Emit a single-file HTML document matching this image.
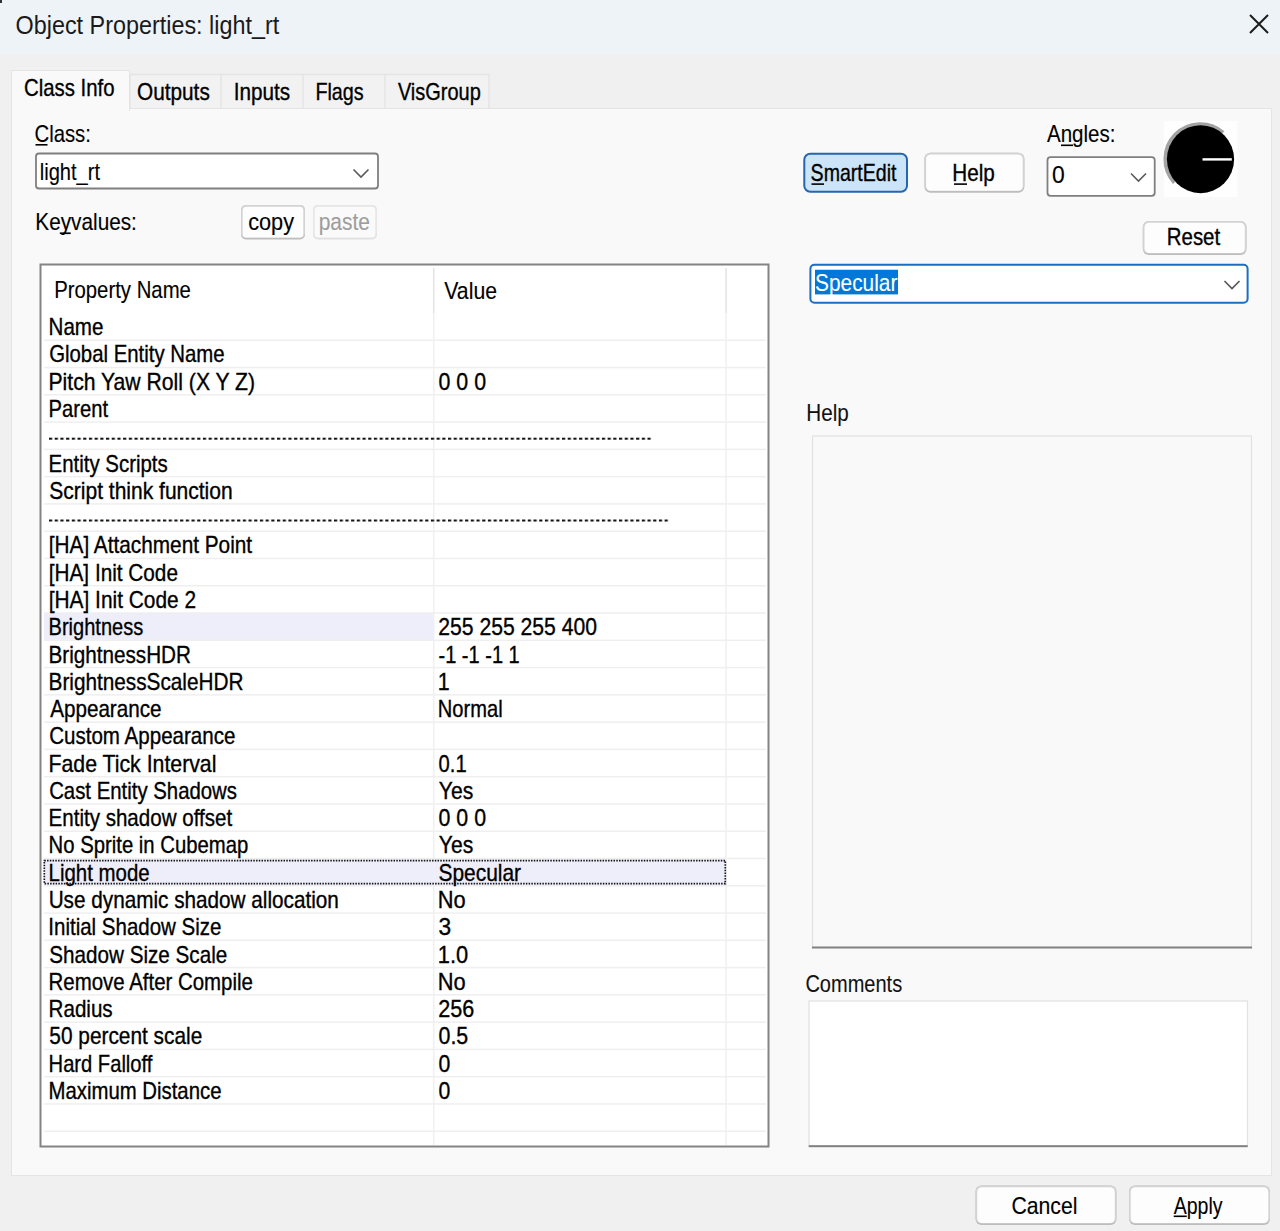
<!DOCTYPE html>
<html><head><meta charset="utf-8"><title>Object Properties: light_rt</title>
<style>html,body{margin:0;padding:0;background:#f0f0f0;overflow:hidden}
svg{display:block} text{font-family:"Liberation Sans",sans-serif;white-space:pre}</style></head>
<body><svg width="1280" height="1231" viewBox="0 0 1280 1231">
<defs><pattern id="dash" x="49" y="0" width="5.7" height="2" patternUnits="userSpaceOnUse"><rect x="0" y="0" width="3.2" height="2" fill="#111"/></pattern></defs>
<rect x="0" y="0" width="1280" height="1231" fill="#f0f0f0"/>
<rect x="0" y="0" width="1280" height="55" fill="#eef3f8"/>
<rect x="0" y="0" width="2" height="3" fill="#333"/>
<text x="15.55" y="33.70" font-size="25" textLength="263.64" lengthAdjust="spacingAndGlyphs" fill="#1a1a1a" stroke="#1a1a1a" stroke-width="0">Object Properties: light_rt</text>
<path d="M1250 15 L1268 33 M1268 15 L1250 33" stroke="#1b1b1b" stroke-width="2" fill="none"/>
<rect x="130" y="74" width="91" height="35" fill="#f2f2f2"/>
<rect x="221" y="74" width="82" height="35" fill="#f2f2f2"/>
<rect x="303" y="74" width="82" height="35" fill="#f2f2f2"/>
<rect x="385" y="74" width="104" height="35" fill="#f2f2f2"/>
<path d="M130 74.5 H489" stroke="#e4e4e4" stroke-width="1.5"/>
<path d="M130 74 V108" stroke="#e4e4e4" stroke-width="1.5"/>
<path d="M221 74 V108" stroke="#e4e4e4" stroke-width="1.5"/>
<path d="M303 74 V108" stroke="#e4e4e4" stroke-width="1.5"/>
<path d="M385 74 V108" stroke="#e4e4e4" stroke-width="1.5"/>
<path d="M489 74 V108" stroke="#e4e4e4" stroke-width="1.5"/>
<text x="137.07" y="100.00" font-size="24" textLength="72.70" lengthAdjust="spacingAndGlyphs" fill="#000" stroke="#000" stroke-width="0.35">Outputs</text>
<text x="233.64" y="100.00" font-size="24" textLength="56.37" lengthAdjust="spacingAndGlyphs" fill="#000" stroke="#000" stroke-width="0.35">Inputs</text>
<text x="315.42" y="100.00" font-size="24" textLength="48.28" lengthAdjust="spacingAndGlyphs" fill="#000" stroke="#000" stroke-width="0.35">Flags</text>
<text x="397.90" y="100.00" font-size="24" textLength="82.91" lengthAdjust="spacingAndGlyphs" fill="#000" stroke="#000" stroke-width="0.35">VisGroup</text>
<rect x="11.5" y="108.5" width="1260" height="1067" fill="#f9f9f9" stroke="#e4e4e4" stroke-width="1"/>
<rect x="11.5" y="70.5" width="118" height="40" fill="#f9f9f9" stroke="#e4e4e4" stroke-width="1"/>
<rect x="12" y="107" width="117" height="4" fill="#f9f9f9"/>
<text x="23.98" y="95.60" font-size="24" textLength="90.61" lengthAdjust="spacingAndGlyphs" fill="#000" stroke="#000" stroke-width="0.35">Class Info</text>
<text x="34.48" y="142.40" font-size="24" textLength="56.41" lengthAdjust="spacingAndGlyphs" fill="#000" stroke="#000" stroke-width="0.12">Class:</text>
<rect x="35.5" y="144" width="12" height="1.6" fill="#000"/>
<rect x="36" y="153.5" width="342" height="35" rx="3" fill="#fff" stroke="#7f7f7f" stroke-width="1.8"/>
<text x="39.69" y="179.70" font-size="24" textLength="60.44" lengthAdjust="spacingAndGlyphs" fill="#000" stroke="#000" stroke-width="0.12">light_rt</text>
<path d="M353.5 169.5 L361 177 L368.5 169.5" stroke="#5a5a5a" stroke-width="1.6" fill="none"/>
<text x="35.34" y="229.60" font-size="24" textLength="101.57" lengthAdjust="spacingAndGlyphs" fill="#000" stroke="#000" stroke-width="0.12">Keyvalues:</text>
<rect x="59.8" y="232.4" width="10.9" height="1.7" fill="#000"/>
<rect x="241.00" y="205.00" width="64.00" height="34.50" rx="5" fill="#bdbdbd"/><rect x="241.00" y="205.00" width="64.00" height="32.90" rx="5" fill="#d3d3d3"/><rect x="242.70" y="206.70" width="60.60" height="30.80" rx="3.5" fill="#fdfdfd"/>
<text x="248.13" y="230.00" font-size="24" textLength="45.92" lengthAdjust="spacingAndGlyphs" fill="#000" stroke="#000" stroke-width="0.12">copy</text>
<rect x="313.00" y="205.00" width="64.00" height="34.50" rx="5" fill="#e0e0e0"/><rect x="313.00" y="205.00" width="64.00" height="32.90" rx="5" fill="#e6e6e6"/><rect x="314.70" y="206.70" width="60.60" height="30.80" rx="3.5" fill="#fafafa"/>
<text x="318.64" y="230.00" font-size="24" textLength="51.34" lengthAdjust="spacingAndGlyphs" fill="#9d9d9d" stroke="#9d9d9d" stroke-width="0.12">paste</text>
<rect x="40.5" y="264.5" width="728" height="882" fill="#fff" stroke="#848484" stroke-width="2"/>
<rect x="44" y="613.02" width="390" height="27.27" fill="#eeeefa"/>
<rect x="44" y="858.50" width="682" height="27.27" fill="#eeeefa"/>
<rect x="44" y="339.52" width="722" height="1.5" fill="#efefef"/>
<rect x="44" y="366.80" width="722" height="1.5" fill="#efefef"/>
<rect x="44" y="394.07" width="722" height="1.5" fill="#efefef"/>
<rect x="44" y="421.35" width="722" height="1.5" fill="#efefef"/>
<rect x="44" y="448.62" width="722" height="1.5" fill="#efefef"/>
<rect x="44" y="475.90" width="722" height="1.5" fill="#efefef"/>
<rect x="44" y="503.17" width="722" height="1.5" fill="#efefef"/>
<rect x="44" y="530.45" width="722" height="1.5" fill="#efefef"/>
<rect x="44" y="557.73" width="722" height="1.5" fill="#efefef"/>
<rect x="44" y="585.00" width="722" height="1.5" fill="#efefef"/>
<rect x="44" y="612.27" width="722" height="1.5" fill="#efefef"/>
<rect x="44" y="639.55" width="722" height="1.5" fill="#efefef"/>
<rect x="44" y="666.83" width="722" height="1.5" fill="#efefef"/>
<rect x="44" y="694.10" width="722" height="1.5" fill="#efefef"/>
<rect x="44" y="721.38" width="722" height="1.5" fill="#efefef"/>
<rect x="44" y="748.65" width="722" height="1.5" fill="#efefef"/>
<rect x="44" y="775.92" width="722" height="1.5" fill="#efefef"/>
<rect x="44" y="803.20" width="722" height="1.5" fill="#efefef"/>
<rect x="44" y="830.48" width="722" height="1.5" fill="#efefef"/>
<rect x="44" y="857.75" width="722" height="1.5" fill="#efefef"/>
<rect x="44" y="885.02" width="722" height="1.5" fill="#efefef"/>
<rect x="44" y="912.30" width="722" height="1.5" fill="#efefef"/>
<rect x="44" y="939.57" width="722" height="1.5" fill="#efefef"/>
<rect x="44" y="966.85" width="722" height="1.5" fill="#efefef"/>
<rect x="44" y="994.12" width="722" height="1.5" fill="#efefef"/>
<rect x="44" y="1021.40" width="722" height="1.5" fill="#efefef"/>
<rect x="44" y="1048.67" width="722" height="1.5" fill="#efefef"/>
<rect x="44" y="1075.95" width="722" height="1.5" fill="#efefef"/>
<rect x="44" y="1103.22" width="722" height="1.5" fill="#efefef"/>
<rect x="44" y="1130.50" width="722" height="1.5" fill="#efefef"/>
<rect x="433" y="268" width="1.5" height="45" fill="#e3e3e3"/>
<rect x="725.3" y="268" width="1.5" height="45" fill="#e3e3e3"/>
<rect x="433" y="313" width="1.5" height="832" fill="#f0f0f0"/>
<rect x="725.3" y="313" width="1.5" height="832" fill="#f0f0f0"/>
<text x="54.17" y="298.00" font-size="24" textLength="136.74" lengthAdjust="spacingAndGlyphs" fill="#000" stroke="#000" stroke-width="0.12">Property Name</text>
<text x="444.29" y="298.75" font-size="24" textLength="52.74" lengthAdjust="spacingAndGlyphs" fill="#000" stroke="#000" stroke-width="0.12">Value</text>
<text x="48.55" y="335.20" font-size="24" textLength="54.93" lengthAdjust="spacingAndGlyphs" fill="#000" stroke="#000" stroke-width="0.35">Name</text>
<text x="49.18" y="362.47" font-size="24" textLength="175.48" lengthAdjust="spacingAndGlyphs" fill="#000" stroke="#000" stroke-width="0.35">Global Entity Name</text>
<text x="48.51" y="389.75" font-size="24" textLength="206.58" lengthAdjust="spacingAndGlyphs" fill="#000" stroke="#000" stroke-width="0.35">Pitch Yaw Roll (X Y Z)</text>
<text x="438.55" y="389.75" font-size="24" textLength="47.48" lengthAdjust="spacingAndGlyphs" fill="#000" stroke="#000" stroke-width="0.35">0 0 0</text>
<text x="48.58" y="417.02" font-size="24" textLength="59.55" lengthAdjust="spacingAndGlyphs" fill="#000" stroke="#000" stroke-width="0.35">Parent</text>
<rect x="49" y="437.70" width="602.4" height="2" fill="url(#dash)"/>
<text x="48.57" y="471.57" font-size="24" textLength="119.15" lengthAdjust="spacingAndGlyphs" fill="#000" stroke="#000" stroke-width="0.35">Entity Scripts</text>
<text x="49.25" y="498.85" font-size="24" textLength="183.40" lengthAdjust="spacingAndGlyphs" fill="#000" stroke="#000" stroke-width="0.35">Script think function</text>
<rect x="49" y="519.52" width="619.8" height="2" fill="url(#dash)"/>
<text x="48.74" y="553.40" font-size="24" textLength="203.42" lengthAdjust="spacingAndGlyphs" fill="#000" stroke="#000" stroke-width="0.35">[HA] Attachment Point</text>
<text x="48.75" y="580.68" font-size="24" textLength="129.19" lengthAdjust="spacingAndGlyphs" fill="#000" stroke="#000" stroke-width="0.35">[HA] Init Code</text>
<text x="48.74" y="607.95" font-size="24" textLength="147.29" lengthAdjust="spacingAndGlyphs" fill="#000" stroke="#000" stroke-width="0.35">[HA] Init Code 2</text>
<text x="48.60" y="635.23" font-size="24" textLength="94.60" lengthAdjust="spacingAndGlyphs" fill="#000" stroke="#000" stroke-width="0.35">Brightness</text>
<text x="438.34" y="635.23" font-size="24" textLength="158.70" lengthAdjust="spacingAndGlyphs" fill="#000" stroke="#000" stroke-width="0.35">255 255 255 400</text>
<text x="48.55" y="662.50" font-size="24" textLength="142.41" lengthAdjust="spacingAndGlyphs" fill="#000" stroke="#000" stroke-width="0.35">BrightnessHDR</text>
<text x="438.50" y="662.50" font-size="24" textLength="81.20" lengthAdjust="spacingAndGlyphs" fill="#000" stroke="#000" stroke-width="0.35">-1 -1 -1 1</text>
<text x="48.54" y="689.78" font-size="24" textLength="194.95" lengthAdjust="spacingAndGlyphs" fill="#000" stroke="#000" stroke-width="0.35">BrightnessScaleHDR</text>
<text x="437.79" y="689.78" font-size="24" textLength="11.95" lengthAdjust="spacingAndGlyphs" fill="#000" stroke="#000" stroke-width="0.35">1</text>
<text x="50.20" y="717.05" font-size="24" textLength="111.30" lengthAdjust="spacingAndGlyphs" fill="#000" stroke="#000" stroke-width="0.35">Appearance</text>
<text x="437.79" y="717.05" font-size="24" textLength="64.82" lengthAdjust="spacingAndGlyphs" fill="#000" stroke="#000" stroke-width="0.35">Normal</text>
<text x="49.17" y="744.33" font-size="24" textLength="186.28" lengthAdjust="spacingAndGlyphs" fill="#000" stroke="#000" stroke-width="0.35">Custom Appearance</text>
<text x="48.50" y="771.60" font-size="24" textLength="167.93" lengthAdjust="spacingAndGlyphs" fill="#000" stroke="#000" stroke-width="0.35">Fade Tick Interval</text>
<text x="438.59" y="771.60" font-size="24" textLength="28.07" lengthAdjust="spacingAndGlyphs" fill="#000" stroke="#000" stroke-width="0.35">0.1</text>
<text x="49.18" y="798.88" font-size="24" textLength="187.82" lengthAdjust="spacingAndGlyphs" fill="#000" stroke="#000" stroke-width="0.35">Cast Entity Shadows</text>
<text x="438.87" y="798.88" font-size="24" textLength="34.39" lengthAdjust="spacingAndGlyphs" fill="#000" stroke="#000" stroke-width="0.35">Yes</text>
<text x="48.56" y="826.15" font-size="24" textLength="183.57" lengthAdjust="spacingAndGlyphs" fill="#000" stroke="#000" stroke-width="0.35">Entity shadow offset</text>
<text x="438.55" y="826.15" font-size="24" textLength="47.48" lengthAdjust="spacingAndGlyphs" fill="#000" stroke="#000" stroke-width="0.35">0 0 0</text>
<text x="48.58" y="853.43" font-size="24" textLength="199.71" lengthAdjust="spacingAndGlyphs" fill="#000" stroke="#000" stroke-width="0.35">No Sprite in Cubemap</text>
<text x="438.87" y="853.43" font-size="24" textLength="34.39" lengthAdjust="spacingAndGlyphs" fill="#000" stroke="#000" stroke-width="0.35">Yes</text>
<text x="48.56" y="880.70" font-size="24" textLength="101.16" lengthAdjust="spacingAndGlyphs" fill="#000" stroke="#000" stroke-width="0.35">Light mode</text>
<text x="438.46" y="880.70" font-size="24" textLength="82.65" lengthAdjust="spacingAndGlyphs" fill="#000" stroke="#000" stroke-width="0.35">Specular</text>
<text x="48.65" y="907.98" font-size="24" textLength="290.26" lengthAdjust="spacingAndGlyphs" fill="#000" stroke="#000" stroke-width="0.35">Use dynamic shadow allocation</text>
<text x="437.65" y="907.98" font-size="24" textLength="27.89" lengthAdjust="spacingAndGlyphs" fill="#000" stroke="#000" stroke-width="0.35">No</text>
<text x="48.36" y="935.25" font-size="24" textLength="173.05" lengthAdjust="spacingAndGlyphs" fill="#000" stroke="#000" stroke-width="0.35">Initial Shadow Size</text>
<text x="438.49" y="935.25" font-size="24" textLength="12.65" lengthAdjust="spacingAndGlyphs" fill="#000" stroke="#000" stroke-width="0.35">3</text>
<text x="49.27" y="962.52" font-size="24" textLength="177.94" lengthAdjust="spacingAndGlyphs" fill="#000" stroke="#000" stroke-width="0.35">Shadow Size Scale</text>
<text x="437.76" y="962.52" font-size="24" textLength="30.41" lengthAdjust="spacingAndGlyphs" fill="#000" stroke="#000" stroke-width="0.35">1.0</text>
<text x="48.57" y="989.80" font-size="24" textLength="204.34" lengthAdjust="spacingAndGlyphs" fill="#000" stroke="#000" stroke-width="0.35">Remove After Compile</text>
<text x="437.65" y="989.80" font-size="24" textLength="27.89" lengthAdjust="spacingAndGlyphs" fill="#000" stroke="#000" stroke-width="0.35">No</text>
<text x="48.55" y="1017.08" font-size="24" textLength="64.13" lengthAdjust="spacingAndGlyphs" fill="#000" stroke="#000" stroke-width="0.35">Radius</text>
<text x="438.32" y="1017.08" font-size="24" textLength="36.02" lengthAdjust="spacingAndGlyphs" fill="#000" stroke="#000" stroke-width="0.35">256</text>
<text x="49.37" y="1044.35" font-size="24" textLength="152.88" lengthAdjust="spacingAndGlyphs" fill="#000" stroke="#000" stroke-width="0.35">50 percent scale</text>
<text x="438.55" y="1044.35" font-size="24" textLength="29.71" lengthAdjust="spacingAndGlyphs" fill="#000" stroke="#000" stroke-width="0.35">0.5</text>
<text x="48.59" y="1071.62" font-size="24" textLength="103.82" lengthAdjust="spacingAndGlyphs" fill="#000" stroke="#000" stroke-width="0.35">Hard Falloff</text>
<text x="438.55" y="1071.62" font-size="24" textLength="11.82" lengthAdjust="spacingAndGlyphs" fill="#000" stroke="#000" stroke-width="0.35">0</text>
<text x="48.57" y="1098.90" font-size="24" textLength="172.89" lengthAdjust="spacingAndGlyphs" fill="#000" stroke="#000" stroke-width="0.35">Maximum Distance</text>
<text x="438.55" y="1098.90" font-size="24" textLength="11.82" lengthAdjust="spacingAndGlyphs" fill="#000" stroke="#000" stroke-width="0.35">0</text>
<rect x="44.3" y="860.60" width="681" height="23.07" fill="none" stroke="#151515" stroke-width="1.7" stroke-dasharray="1.5 1.25"/>
<rect x="804.3" y="153.7" width="102.7" height="38" rx="6" fill="#cce4f7" stroke="#2566ae" stroke-width="2"/>
<text x="810.62" y="181.00" font-size="24" textLength="85.88" lengthAdjust="spacingAndGlyphs" fill="#000" stroke="#000" stroke-width="0.35">SmartEdit</text>
<rect x="811.5" y="183.3" width="12.5" height="1.6" fill="#000"/>
<rect x="924.40" y="152.70" width="100.00" height="40.00" rx="6" fill="#bdbdbd"/><rect x="924.40" y="152.70" width="100.00" height="38.40" rx="6" fill="#d3d3d3"/><rect x="926.10" y="154.40" width="96.60" height="36.30" rx="4.5" fill="#fdfdfd"/>
<text x="952.35" y="181.00" font-size="24" textLength="42.52" lengthAdjust="spacingAndGlyphs" fill="#000" stroke="#000" stroke-width="0.35">Help</text>
<rect x="954" y="183.3" width="13" height="1.6" fill="#000"/>
<text x="1047.00" y="142.30" font-size="24" textLength="68.46" lengthAdjust="spacingAndGlyphs" fill="#000" stroke="#000" stroke-width="0.12">Angles:</text>
<rect x="1061" y="144.5" width="12" height="1.6" fill="#000"/>
<rect x="1047.5" y="157.2" width="107.2" height="38.6" rx="3" fill="#fff" stroke="#7f7f7f" stroke-width="1.8"/>
<text x="1052.08" y="182.80" font-size="24" textLength="12.75" lengthAdjust="spacingAndGlyphs" fill="#000" stroke="#000" stroke-width="0.12">0</text>
<path d="M1131 173.5 L1138.5 181 L1146 173.5" stroke="#5a5a5a" stroke-width="1.6" fill="none"/>
<rect x="1164" y="121" width="73.5" height="76" fill="#fefefe"/>
<path d="M1174.4 182.6 A35 35 0 0 1 1223.2 132.6" stroke="#a3a3a3" stroke-width="3.8" fill="none"/>
<ellipse cx="1200.5" cy="159.2" rx="33.6" ry="34" fill="#000"/>
<rect x="1202.5" y="158.2" width="29.3" height="2.4" fill="#fff"/>
<rect x="1142.80" y="221.00" width="103.70" height="34.00" rx="6" fill="#bdbdbd"/><rect x="1142.80" y="221.00" width="103.70" height="32.40" rx="6" fill="#d3d3d3"/><rect x="1144.50" y="222.70" width="100.30" height="30.30" rx="4.5" fill="#fdfdfd"/>
<text x="1166.77" y="245.00" font-size="24" textLength="53.38" lengthAdjust="spacingAndGlyphs" fill="#000" stroke="#000" stroke-width="0.35">Reset</text>
<rect x="810.4" y="264.75" width="437.2" height="38" rx="4" fill="#fff" stroke="#1a6fc4" stroke-width="2"/>
<rect x="815" y="269.75" width="83" height="24.65" fill="#0078d7"/>
<text x="815.06" y="290.60" font-size="24" textLength="82.29" lengthAdjust="spacingAndGlyphs" fill="#fff" stroke="#fff" stroke-width="0.1">Specular</text>
<path d="M1224.5 281 L1232 288.5 L1239.5 281" stroke="#555" stroke-width="1.6" fill="none"/>
<text x="806.35" y="421.00" font-size="24" textLength="42.52" lengthAdjust="spacingAndGlyphs" fill="#111" stroke="#111" stroke-width="0.1">Help</text>
<rect x="812.5" y="436" width="439" height="511.5" fill="#f9f9f9" stroke="#e2e2e2" stroke-width="1.3"/>
<rect x="812" y="946.5" width="440" height="2" fill="#818181"/>
<text x="805.40" y="991.90" font-size="24" textLength="96.79" lengthAdjust="spacingAndGlyphs" fill="#111" stroke="#111" stroke-width="0.1">Comments</text>
<rect x="809" y="1001" width="438.5" height="145" fill="#fff" stroke="#e2e2e2" stroke-width="1.3"/>
<rect x="808.7" y="1145.2" width="439" height="2" fill="#818181"/>
<rect x="975.50" y="1185.50" width="141.00" height="39.50" rx="6" fill="#bdbdbd"/><rect x="975.50" y="1185.50" width="141.00" height="37.90" rx="6" fill="#d3d3d3"/><rect x="977.20" y="1187.20" width="137.60" height="35.80" rx="4.5" fill="#fdfdfd"/>
<text x="1011.44" y="1213.75" font-size="24" textLength="66.00" lengthAdjust="spacingAndGlyphs" fill="#000" stroke="#000" stroke-width="0.12">Cancel</text>
<rect x="1129.00" y="1185.50" width="141.00" height="39.50" rx="6" fill="#bdbdbd"/><rect x="1129.00" y="1185.50" width="141.00" height="37.90" rx="6" fill="#d3d3d3"/><rect x="1130.70" y="1187.20" width="137.60" height="35.80" rx="4.5" fill="#fdfdfd"/>
<text x="1173.75" y="1213.75" font-size="24" textLength="48.78" lengthAdjust="spacingAndGlyphs" fill="#000" stroke="#000" stroke-width="0.12">Apply</text>
<rect x="1173.75" y="1215.5" width="13" height="1.6" fill="#000"/>
</svg></body></html>
